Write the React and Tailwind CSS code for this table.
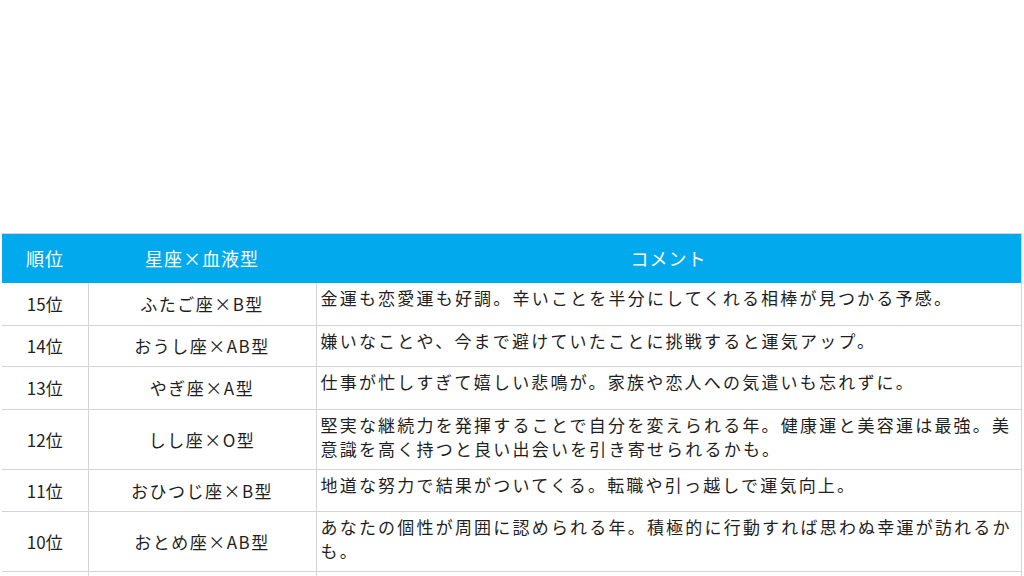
const rows = [
  { rank: "15位", sign: "ふたご座×B型", h: "h-[43px]", lines: ["金運も恋愛運も好調。辛いことを半分にしてくれる相棒が見つかる予感。"] },
  { rank: "14位", sign: "おうし座×AB型", h: "h-[41px]", lines: ["嫌いなことや、今まで避けていたことに挑戦すると運気アップ。"] },
  { rank: "13位", sign: "やぎ座×A型", h: "h-[43px]", lines: ["仕事が忙しすぎて嬉しい悲鳴が。家族や恋人への気遣いも忘れずに。"] },
  { rank: "12位", sign: "しし座×O型", h: "h-[60px]", lines: ["堅実な継続力を発揮することで自分を変えられる年。健康運と美容運は最強。美", "意識を高く持つと良い出会いを引き寄せられるかも。"] },
  { rank: "11位", sign: "おひつじ座×B型", h: "h-[42px]", lines: ["地道な努力で結果がついてくる。転職や引っ越しで運気向上。"] },
  { rank: "10位", sign: "おとめ座×AB型", h: "h-[60px]", lines: ["あなたの個性が周囲に認められる年。積極的に行動すれば思わぬ幸運が訪れるか", "も。"] },
];

export default function App() {
  return (
    <div
      className="h-[576px] w-[1024px] overflow-hidden bg-white pt-[233px] pl-[2px]"
      style={{ fontFamily: '"Noto Sans CJK JP", "Noto Sans", sans-serif' }}
    >
      <table className="w-[1020px] table-fixed border-collapse border-t border-[#d4d4d4] text-[#1f1f1f]">
        <colgroup>
          <col className="w-[86px]" />
          <col className="w-[228px]" />
          <col />
        </colgroup>
        <thead>
          <tr className="h-[49px] bg-[#02a9ec] text-white">
            <th className="p-0 text-center text-[18px] font-normal tracking-[1px]">順位</th>
            <th className="p-0 text-center text-[18px] font-normal tracking-[1px]">星座×血液型</th>
            <th className="border-r border-[#d4d4d4] p-0 text-center text-[18px] font-normal tracking-[1px]">コメント</th>
          </tr>
        </thead>
        <tbody>
          {rows.map((r) => (
            <tr key={r.rank} className={r.h}>
              <td className="border-b border-r border-[#d4d4d4] p-0 text-center align-middle text-[17px]">{r.rank}</td>
              <td className="border-b border-r border-[#d4d4d4] p-0 text-center align-middle text-[17px] tracking-[1.5px]">{r.sign}</td>
              <td className="border-b border-r border-[#d4d4d4] px-[4px] pt-[3px] align-top text-[17px] leading-[24px] tracking-[2.2px] whitespace-nowrap">
                {r.lines.map((l, i) => (
                  <div key={i}>{l}</div>
                ))}
              </td>
            </tr>
          ))}
          <tr className="h-[43px]">
            <td className="border-r border-[#d4d4d4] p-0"></td>
            <td className="border-r border-[#d4d4d4] p-0"></td>
            <td className="border-r border-[#d4d4d4] p-0"></td>
          </tr>
        </tbody>
      </table>
    </div>
  );
}
